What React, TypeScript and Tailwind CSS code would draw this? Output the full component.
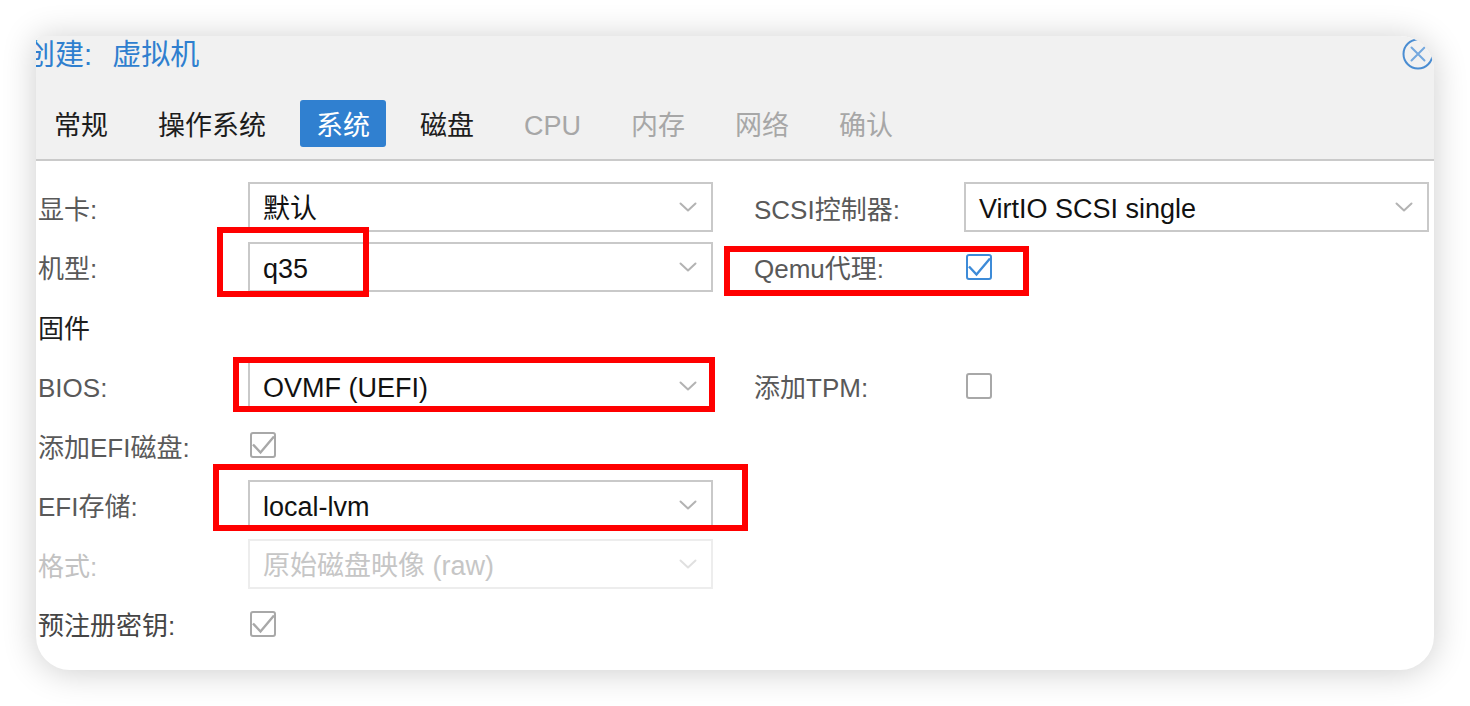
import React from "react";

function Chevron({ color = "#b3b3b3" }: { color?: string }) {
  return (
    <svg width="18" height="10" viewBox="0 0 18 10" fill="none">
      <path d="M1.5 1.5 L9 8.5 L16.5 1.5" stroke={color} strokeWidth="2" strokeLinecap="round" strokeLinejoin="round" />
    </svg>
  );
}

function Select({ value, disabled = false }: { value: string; disabled?: boolean }) {
  return (
    <div
      className={
        disabled
          ? "w-[465px] h-[50px] border-2 border-[#ededed] bg-white flex items-center justify-between pl-[13px] pr-[14px] text-[27px] text-[#c6c6c6]"
          : "w-[465px] h-[50px] border-2 border-[#c9c9c9] bg-white flex items-center justify-between pl-[13px] pr-[14px] text-[27px] text-[#111111]"
      }
    >
      <span className="whitespace-nowrap leading-none pt-[5px]">{value}</span>
      <Chevron color={disabled ? "#e0e0e0" : "#b3b3b3"} />
    </div>
  );
}

function Checkbox({ checked, variant }: { checked: boolean; variant: "blue" | "gray" }) {
  const c = variant === "blue" ? "#3d8bd8" : "#a8a8a8";
  return (
    <svg width="26" height="26" viewBox="0 0 26 26" fill="none" className="ml-[2px]">
      <rect x="1" y="1" width="24" height="24" rx="2" stroke={c} strokeWidth="2" fill="white" />
      {checked && (
        <path d="M3 12.5 L10.5 20.5 L24 4.5" stroke={c} strokeWidth="2.4" strokeLinejoin="miter" fill="none" />
      )}
    </svg>
  );
}

function Label({ text, tone = "normal" }: { text: string; tone?: "normal" | "disabled" | "dark" }) {
  const cls =
    tone === "disabled"
      ? "w-[210px] shrink-0 pt-[5px] text-[26px] text-[#c2c2c2] whitespace-nowrap leading-none"
      : tone === "dark"
      ? "w-[210px] shrink-0 pt-[5px] text-[26px] text-[#454545] whitespace-nowrap leading-none"
      : "w-[210px] shrink-0 pt-[5px] text-[26px] text-[#595959] whitespace-nowrap leading-none";
  return <div className={cls}>{text}</div>;
}

function Row({ children }: { children?: React.ReactNode }) {
  return <div className="h-[50px] flex items-center">{children}</div>;
}

export default function App() {
  const tabs: { name: string; state: "normal" | "active" | "disabled" }[] = [
    { name: "常规", state: "normal" },
    { name: "操作系统", state: "normal" },
    { name: "系统", state: "active" },
    { name: "磁盘", state: "normal" },
    { name: "CPU", state: "disabled" },
    { name: "内存", state: "disabled" },
    { name: "网络", state: "disabled" },
    { name: "确认", state: "disabled" },
  ];

  return (
    <div className="min-h-screen bg-white pt-[36px] pl-[36px] font-['Liberation_Sans','Noto_Sans_CJK_SC',sans-serif]">
      <div className="relative w-[1398px] h-[634px] bg-white rounded-[34px] rounded-tl-[5px] overflow-hidden shadow-[0_2px_34px_rgba(0,0,0,0.2)]">
        {/* Header */}
        <div className="bg-[#f1f1f1] border-b-2 border-[#cacaca]">
          <div className="h-[34px] flex items-center justify-between">
            <div className="ml-[-10px] pt-[5px] text-[29px] leading-none text-[#2f7fcf] whitespace-pre">
              <span>创建: </span>
              <span className="ml-[12px]">虚拟机</span>
            </div>
            <svg width="32" height="32" viewBox="0 0 32 32" fill="none" className="mt-[2px] shrink-0">
              <circle cx="16" cy="16" r="14.5" stroke="#4a8dd2" strokeWidth="2" />
              <path d="M9.5 9.5 L22.5 22.5 M22.5 9.5 L9.5 22.5" stroke="#74a8de" strokeWidth="2" strokeLinecap="round" />
            </svg>
          </div>
          <div className="flex gap-[18px] pl-[2px] pt-[30px] pb-[12px]">
            {tabs.map((t) => (
              <div
                key={t.name}
                className={
                  t.state === "active"
                    ? "h-[47px] px-[16px] pt-[5px] flex items-center rounded-[3px] bg-[#3080d0] text-white text-[27px] leading-none"
                    : t.state === "disabled"
                    ? "h-[47px] px-[16px] pt-[5px] flex items-center text-[#a7a7a7] text-[27px] leading-none"
                    : "h-[47px] px-[16px] pt-[5px] flex items-center text-[#1c1c1c] text-[27px] leading-none"
                }
              >
                {t.name}
              </div>
            ))}
          </div>
        </div>

        {/* Body */}
        <div className="pt-[21px] pl-[2px] flex gap-[41px]">
          <div className="w-[675px] flex flex-col gap-[9.5px]">
            <Row>
              <Label text="显卡:" />
              <Select value="默认" />
            </Row>
            <Row>
              <Label text="机型:" />
              <Select value="q35" />
            </Row>
            <Row>
              <div className="pt-[5px] text-[26px] text-[#1e1e1e] leading-none">固件</div>
            </Row>
            <Row>
              <Label text="BIOS:" />
              <Select value="OVMF (UEFI)" />
            </Row>
            <Row>
              <Label text="添加EFI磁盘:" />
              <Checkbox checked variant="gray" />
            </Row>
            <Row>
              <Label text="EFI存储:" />
              <Select value="local-lvm" />
            </Row>
            <Row>
              <Label text="格式:" tone="disabled" />
              <Select value="原始磁盘映像 (raw)" disabled />
            </Row>
            <Row>
              <Label text="预注册密钥:" tone="dark" />
              <Checkbox checked variant="gray" />
            </Row>
          </div>
          <div className="w-[675px] flex flex-col gap-[9.5px]">
            <Row>
              <Label text="SCSI控制器:" />
              <Select value="VirtIO SCSI single" />
            </Row>
            <Row>
              <Label text="Qemu代理:" />
              <Checkbox checked variant="blue" />
            </Row>
            <Row />
            <Row>
              <Label text="添加TPM:" />
              <Checkbox checked={false} variant="gray" />
            </Row>
          </div>
        </div>

        {/* Red annotation boxes */}
        <div className="absolute left-[181px] top-[191px] w-[152px] h-[70px] border-[6px] border-[#ff0000]" />
        <div className="absolute left-[688px] top-[210px] w-[305px] h-[50px] border-[6px] border-[#ff0000]" />
        <div className="absolute left-[197px] top-[321px] w-[482px] h-[55px] border-[6px] border-[#ff0000]" />
        <div className="absolute left-[177px] top-[428px] w-[535px] h-[67px] border-[6px] border-[#ff0000]" />
      </div>
    </div>
  );
}
